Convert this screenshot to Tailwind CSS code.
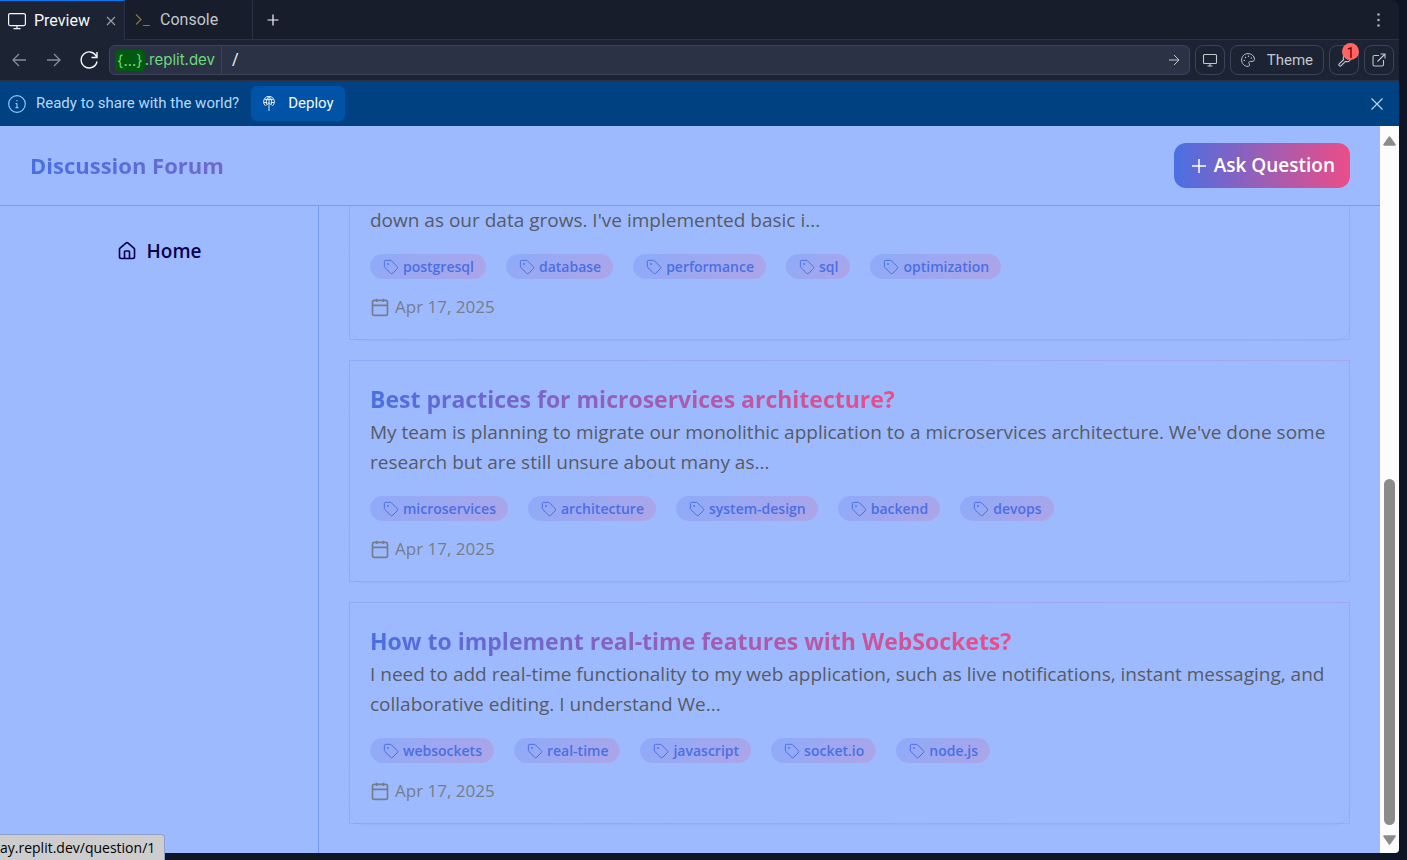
<!DOCTYPE html>
<html lang="en">
<head>
<meta charset="utf-8">
<title>Discussion Forum</title>
<script src="https://cdn.jsdelivr.net/npm/@tailwindcss/browser@4"></script>
</head>
<body class="relative flex h-screen flex-col overflow-hidden bg-[#0e1525] pr-2 pb-[7px] font-[Roboto,sans-serif]">
<svg class="hidden">
  <symbol id="tag" viewBox="0 0 24 24"><path d="M12.6 2.6A2 2 0 0 0 11.2 2H4a2 2 0 0 0-2 2v7.2a2 2 0 0 0 .6 1.4l8.7 8.7a2.4 2.4 0 0 0 3.4 0l6.6-6.6a2.4 2.4 0 0 0 0-3.4z"/><circle cx="7.5" cy="7.5" r=".7" fill="currentColor"/></symbol>
  <symbol id="cal" viewBox="0 0 24 24"><path d="M8 2v4M16 2v4M3 10h18"/><rect x="3" y="4" width="18" height="18" rx="2"/></symbol>
</svg>

<div class="flex h-10 shrink-0 rounded-tr-lg bg-[#171d2b] text-base">
  <div class="flex w-[125px] items-center border-t border-r border-t-[#0079f2] border-r-[#2b3245] bg-[#1c2333] pl-2 text-[#f5f9fc]">
    <svg class="mr-2 size-[18px] shrink-0" viewBox="0 0 18 18" fill="none" stroke="currentColor" stroke-width="1.2"><rect x="0.6" y="1.6" width="16.8" height="12" rx="1.5"/><path d="M9 13.6v3M5.5 16.6h7"/></svg>
    <span>Preview</span>
    <button class="ml-auto mr-2 text-[#9da2a6]" aria-label="Close tab"><svg class="size-[10px]" viewBox="0 0 10 10" stroke="currentColor" stroke-width="1.1"><path d="M1 1l8 8M9 1l-8 8"/></svg></button>
  </div>
  <div class="flex w-32 items-center border-t border-r border-b border-[#2b3245] border-t-transparent pl-[10px] text-[#c2c8cc]">
    <svg class="mr-[9px] h-4 w-4" viewBox="0 0 16 16" fill="none" stroke="#857747" stroke-width="1.2"><path d="M1 2.500l5 5-5 5M8 13.500h7"/></svg>
    <span>Console</span>
  </div>
  <div class="flex flex-1 items-center justify-between border-b border-[#2b3245] pr-[15px] pl-[14px]">
    <button class="text-[#f5f9fc]" aria-label="New tab"><svg class="size-3" viewBox="0 0 12 12" stroke="currentColor" stroke-width="1.2"><path d="M6 .5v11M.5 6h11"/></svg></button>
    <button class="text-[#a9afb6]" aria-label="More"><svg class="h-4 w-[11px]" viewBox="0 0 11 16" fill="currentColor"><circle cx="5.500" cy="2.500" r="1.300"/><circle cx="5.500" cy="8" r="1.300"/><circle cx="5.500" cy="13.500" r="1.300"/></svg></button>
  </div>
</div>

<div class="flex h-[41px] shrink-0 items-center gap-[5px] border-b border-[#2b3245] bg-[#1c2333] pr-[5px] pl-1 text-[#c2c8cc]">
  <button class="grid size-[30px] place-items-center text-[#868c98]" aria-label="Back"><svg class="size-[14px]" viewBox="0 0 14 14" fill="none" stroke="currentColor" stroke-width="1.3"><path d="M14 7H1M7 1L1 7l6 6"/></svg></button>
  <button class="grid size-[30px] place-items-center text-[#868c98]" aria-label="Forward"><svg class="size-[14px]" viewBox="0 0 14 14" fill="none" stroke="currentColor" stroke-width="1.3"><path d="M0 7h13M7 1l6 6-6 6"/></svg></button>
  <button class="grid size-[30px] place-items-center text-[#f5f9fc]" aria-label="Reload"><svg class="size-[18px]" viewBox="0 0 18 18" fill="none" stroke="currentColor" stroke-width="1.400"><path d="M17 1v5.500h-5.500M16.700 6.300A8 8 0 1 0 17 10.500"/></svg></button>
  <div class="flex h-[30px] flex-1 items-center rounded-md border border-[#3c445c] bg-[#2b3245] text-base">
    <div class="flex h-full items-center border-r border-[#3c445c] pr-[6px] pl-[5px] font-[Inter,sans-serif] text-[15px] text-[#6cd97e]"><span class="rounded-sm bg-[#005a10] px-[2px] leading-[21px]">{...}</span>.replit.dev</div>
    <input class="min-w-0 flex-1 bg-transparent px-[10px] text-[#f5f9fc] outline-none" aria-label="Path" value="/">
    <button class="mr-[9px]" aria-label="Go"><svg class="size-3" viewBox="0 0 12 12" fill="none" stroke="currentColor"><path d="M1 6h10M6 1l5 5-5 5"/></svg></button>
  </div>
  <button class="grid size-[30px] place-items-center rounded-lg border border-[#3c445c]" aria-label="Device size"><svg class="h-[14px] w-4" viewBox="0 0 16 14" fill="none" stroke="currentColor" stroke-width="1.100"><rect x="1.500" y="1.500" width="13" height="9" rx="1"/><path d="M8 10.500v2.500M5.500 13h5"/></svg></button>
  <button class="flex h-[30px] items-center gap-3 rounded-lg border border-[#3c445c] px-[10px] text-[15px]">
    <svg class="size-[14px]" viewBox="0 0 14 14" fill="none" stroke="currentColor"><path d="M7 .6C3.400.6.6 3.400.6 7s2.900 6.400 6.400 6.400c1 0 1.600-.7 1.600-1.500 0-1.100-.8-1.300-.8-2.200 0-.8.600-1.300 1.500-1.300h1.900c1.500 0 2.200-1 2.200-2.200C13.400 3 10.400.6 7 .6z"/><g fill="currentColor" stroke="none"><circle cx="3.300" cy="7.500" r=".7"/><circle cx="4.500" cy="4.500" r=".7"/><circle cx="7.500" cy="3.300" r=".7"/><circle cx="10.300" cy="5" r=".7"/></g></svg>
    Theme
  </button>
  <button class="relative grid size-[30px] place-items-center rounded-lg border border-[#3c445c]" aria-label="Developer tools, 1 message">
    <svg class="size-[15px]" viewBox="0 0 24 24" fill="none" stroke="currentColor" stroke-width="1.800"><path d="M14.700 6.300a1 1 0 0 0 0 1.400l1.600 1.600a1 1 0 0 0 1.400 0l3.800-3.800a6 6 0 0 1-7.900 7.900L6.700 20.300a2.100 2.100 0 0 1-3-3l6.900-6.900a6 6 0 0 1 7.900-7.900z"/></svg>
    <span class="absolute -top-[3px] -right-px grid size-[17px] place-items-center rounded-full bg-[#ff6666] text-sm text-[#520000]">1</span>
  </button>
  <button class="grid size-[30px] place-items-center rounded-lg border border-[#3c445c]" aria-label="Open in new tab"><svg class="size-[14px]" viewBox="0 0 14 14" fill="none" stroke="currentColor" stroke-width="1.100"><path d="M8.500 1H13v4.500M13 1L5.500 8.500M7 2.500H2.500A1.500 1.500 0 0 0 1 4v7.500A1.500 1.500 0 0 0 2.500 13H10a1.500 1.500 0 0 0 1.500-1.500V7"/></svg></button>
</div>

<div class="flex h-[45px] shrink-0 items-center bg-[#004182] pr-4 pl-2 text-[15px] text-[#b3d9ff]">
  <svg class="mr-[10px] size-[18px]" viewBox="0 0 18 18" fill="none" stroke="#8fc7ff" stroke-width="1.200"><circle cx="9" cy="9" r="8.300"/><path d="M9 8.500v4M7.500 8.500H9M7.500 12.700h3M9 5v1.300"/></svg>
  <span>Ready to share with the world?</span>
  <button class="ml-3 flex h-[35px] items-center gap-[13px] rounded-md bg-[#0053a6] pr-[11px] pl-3 text-[#f5f9fc]">
    <svg class="h-[15px] w-3" viewBox="0 0 12 15" fill="none" stroke="currentColor" stroke-width=".9"><path d="M2.500 9.800A5.400 5.400 0 1 1 9.500 9.800M1.400 3.600h9.200M.7 6.500h3.500M7.800 6.500h3.500M3.600 8.500C2.800 4.500 4 1.800 6 .6 8 1.800 9.200 4.500 8.400 8.500M6 .6V15M3.400 9.300L6 6.700l2.600 2.600"/></svg>
    Deploy
  </button>
  <button class="ml-auto" aria-label="Dismiss"><svg class="size-3" viewBox="0 0 12 12" stroke="currentColor" stroke-width="1.200"><path d="M.5.5l11 11M11.500.5l-11 11"/></svg></button>
</div>

<div class="flex min-h-0 flex-1 overflow-hidden rounded-br font-['Open_Sans',sans-serif]">
  <div class="flex min-w-0 flex-1 flex-col bg-[#9ebaff]">
    <header class="flex h-20 shrink-0 items-center justify-between border-b border-[#7799ff] px-[30px]">
      <h1 class="bg-linear-to-r/srgb from-[#4a6fe3] to-[#6f69cc] bg-clip-text text-[22px] font-bold text-transparent">Discussion Forum</h1>
      <button class="flex h-[45px] items-center gap-[5px] rounded-xl bg-linear-to-r/srgb from-[#4a6fe3] to-[#eb4d88] px-[15px] text-[19px] font-semibold text-white">
        <svg class="size-5" viewBox="0 0 20 20" stroke="currentColor" stroke-width="1.500"><path d="M10 3v14M3 10h14"/></svg>
        Ask Question
      </button>
    </header>
    <div class="flex min-h-0 flex-1">
      <nav class="w-[319px] shrink-0 border-r border-[#7799ff] pt-[30px]">
        <a href="#" class="flex items-center justify-center gap-[10px] text-[19px] leading-[30px] font-semibold text-[#0b0050]">
          <svg class="size-5" viewBox="0 0 24 24" fill="none" stroke="currentColor" stroke-width="2" stroke-linejoin="round"><path d="M15 21v-8a1 1 0 0 0-1-1h-4a1 1 0 0 0-1 1v8"/><path d="M3 10a2 2 0 0 1 .7-1.500l7-6a2 2 0 0 1 2.600 0l7 6A2 2 0 0 1 21 10v9a2 2 0 0 1-2 2H5a2 2 0 0 1-2-2z"/></svg>
          Home
        </a>
      </nav>
      <main class="flex min-w-0 flex-1 flex-col justify-end gap-5 overflow-hidden px-[30px] pb-[29px]">

        <article class="shrink-0 rounded-2xl border border-t-0 p-5 pt-0 shadow-xs [border-image:linear-gradient(135deg,#4a6fe333,#eb4d8833)_1]">
          <p class="text-[19px] leading-[30px] text-[#555b66]">down as our data grows. I've implemented basic i...</p>
          <ul class="mt-[19px] flex gap-5 text-sm font-semibold text-[#4a6fe3]">
            <li class="flex h-[25px] items-center gap-1 rounded-full bg-linear-135/srgb from-[#4a6fe333] to-[#eb4d8833] pr-3 pl-[13px]"><svg class="size-4" fill="none" stroke="currentColor" stroke-width="1.500"><use href="#tag"/></svg>postgresql</li>
            <li class="flex h-[25px] items-center gap-1 rounded-full bg-linear-135/srgb from-[#4a6fe333] to-[#eb4d8833] pr-3 pl-[13px]"><svg class="size-4" fill="none" stroke="currentColor" stroke-width="1.500"><use href="#tag"/></svg>database</li>
            <li class="flex h-[25px] items-center gap-1 rounded-full bg-linear-135/srgb from-[#4a6fe333] to-[#eb4d8833] pr-3 pl-[13px]"><svg class="size-4" fill="none" stroke="currentColor" stroke-width="1.500"><use href="#tag"/></svg>performance</li>
            <li class="flex h-[25px] items-center gap-1 rounded-full bg-linear-135/srgb from-[#4a6fe333] to-[#eb4d8833] pr-3 pl-[13px]"><svg class="size-4" fill="none" stroke="currentColor" stroke-width="1.500"><use href="#tag"/></svg>sql</li>
            <li class="flex h-[25px] items-center gap-1 rounded-full bg-linear-135/srgb from-[#4a6fe333] to-[#eb4d8833] pr-3 pl-[13px]"><svg class="size-4" fill="none" stroke="currentColor" stroke-width="1.500"><use href="#tag"/></svg>optimization</li>
          </ul>
          <p class="mt-4 flex h-6 items-center gap-[5px] text-[17px] text-[#757d8c]"><svg class="size-5" fill="none" stroke="currentColor" stroke-width="2"><use href="#cal"/></svg>Apr 17, 2025</p>
        </article>

        <article class="shrink-0 rounded-2xl border p-5 shadow-xs [border-image:linear-gradient(135deg,#4a6fe333,#eb4d8833)_1]">
          <h2 class="w-fit bg-linear-to-r/srgb from-[#4a6fe3] to-[#eb4d88] bg-clip-text text-[23px] leading-9 font-bold text-transparent">Best practices for microservices architecture?</h2>
          <p class="text-[19px] leading-[30px] text-[#555b66]">My team is planning to migrate our monolithic application to a microservices architecture. We've done some research but are still unsure about many as...</p>
          <ul class="mt-[19px] flex gap-5 text-sm font-semibold text-[#4a6fe3]">
            <li class="flex h-[25px] items-center gap-1 rounded-full bg-linear-135/srgb from-[#4a6fe333] to-[#eb4d8833] pr-3 pl-[13px]"><svg class="size-4" fill="none" stroke="currentColor" stroke-width="1.500"><use href="#tag"/></svg>microservices</li>
            <li class="flex h-[25px] items-center gap-1 rounded-full bg-linear-135/srgb from-[#4a6fe333] to-[#eb4d8833] pr-3 pl-[13px]"><svg class="size-4" fill="none" stroke="currentColor" stroke-width="1.500"><use href="#tag"/></svg>architecture</li>
            <li class="flex h-[25px] items-center gap-1 rounded-full bg-linear-135/srgb from-[#4a6fe333] to-[#eb4d8833] pr-3 pl-[13px]"><svg class="size-4" fill="none" stroke="currentColor" stroke-width="1.500"><use href="#tag"/></svg>system-design</li>
            <li class="flex h-[25px] items-center gap-1 rounded-full bg-linear-135/srgb from-[#4a6fe333] to-[#eb4d8833] pr-3 pl-[13px]"><svg class="size-4" fill="none" stroke="currentColor" stroke-width="1.500"><use href="#tag"/></svg>backend</li>
            <li class="flex h-[25px] items-center gap-1 rounded-full bg-linear-135/srgb from-[#4a6fe333] to-[#eb4d8833] pr-3 pl-[13px]"><svg class="size-4" fill="none" stroke="currentColor" stroke-width="1.500"><use href="#tag"/></svg>devops</li>
          </ul>
          <p class="mt-4 flex h-6 items-center gap-[5px] text-[17px] text-[#757d8c]"><svg class="size-5" fill="none" stroke="currentColor" stroke-width="2"><use href="#cal"/></svg>Apr 17, 2025</p>
        </article>

        <article class="shrink-0 rounded-2xl border p-5 shadow-xs [border-image:linear-gradient(135deg,#4a6fe333,#eb4d8833)_1]">
          <h2 class="w-fit bg-linear-to-r/srgb from-[#4a6fe3] to-[#eb4d88] bg-clip-text text-[23px] leading-9 font-bold text-transparent">How to implement real-time features with WebSockets?</h2>
          <p class="text-[19px] leading-[30px] text-[#555b66]">I need to add real-time functionality to my web application, such as live notifications, instant messaging, and collaborative editing. I understand We...</p>
          <ul class="mt-[19px] flex gap-5 text-sm font-semibold text-[#4a6fe3]">
            <li class="flex h-[25px] items-center gap-1 rounded-full bg-linear-135/srgb from-[#4a6fe333] to-[#eb4d8833] pr-3 pl-[13px]"><svg class="size-4" fill="none" stroke="currentColor" stroke-width="1.500"><use href="#tag"/></svg>websockets</li>
            <li class="flex h-[25px] items-center gap-1 rounded-full bg-linear-135/srgb from-[#4a6fe333] to-[#eb4d8833] pr-3 pl-[13px]"><svg class="size-4" fill="none" stroke="currentColor" stroke-width="1.500"><use href="#tag"/></svg>real-time</li>
            <li class="flex h-[25px] items-center gap-1 rounded-full bg-linear-135/srgb from-[#4a6fe333] to-[#eb4d8833] pr-3 pl-[13px]"><svg class="size-4" fill="none" stroke="currentColor" stroke-width="1.500"><use href="#tag"/></svg>javascript</li>
            <li class="flex h-[25px] items-center gap-1 rounded-full bg-linear-135/srgb from-[#4a6fe333] to-[#eb4d8833] pr-3 pl-[13px]"><svg class="size-4" fill="none" stroke="currentColor" stroke-width="1.500"><use href="#tag"/></svg>socket.io</li>
            <li class="flex h-[25px] items-center gap-1 rounded-full bg-linear-135/srgb from-[#4a6fe333] to-[#eb4d8833] pr-3 pl-[13px]"><svg class="size-4" fill="none" stroke="currentColor" stroke-width="1.500"><use href="#tag"/></svg>node.js</li>
          </ul>
          <p class="mt-4 flex h-6 items-center gap-[5px] text-[17px] text-[#757d8c]"><svg class="size-5" fill="none" stroke="currentColor" stroke-width="2"><use href="#cal"/></svg>Apr 17, 2025</p>
        </article>
      </main>
    </div>
  </div>
  <div class="flex w-[19px] shrink-0 flex-col items-center bg-[#fcfcfc] py-2 text-[#8b8b8b]">
    <svg class="mt-[2px] h-[10px] w-[13px]" viewBox="0 0 13 10" fill="currentColor"><path d="M5.700.8a1 1 0 0 1 1.600 0l5.300 7.400c.5.700.1 1.500-.8 1.500H1.200c-.9 0-1.300-.8-.8-1.500z"/></svg>
    <div class="flex-1"></div>
    <div class="h-[346px] w-[11px] rounded-full bg-[#8b8b8b]"></div>
    <svg class="mt-[10px] h-[10px] w-[13px]" viewBox="0 0 13 10" fill="currentColor"><path d="M5.700 9.200a1 1 0 0 0 1.600 0l5.300-7.400c.5-.7.1-1.500-.8-1.500H1.200C.3.300-.1 1.100.4 1.800z"/></svg>
  </div>
</div>

<div class="absolute bottom-0 left-0 h-[26px] w-[165px] overflow-hidden rounded-tr border-t border-r border-[#8fa0cc] bg-[#cdcdcd] font-['Open_Sans',sans-serif] text-sm leading-[26px] whitespace-nowrap text-black">ay.replit.dev/question/1</div>
</body>
</html>
